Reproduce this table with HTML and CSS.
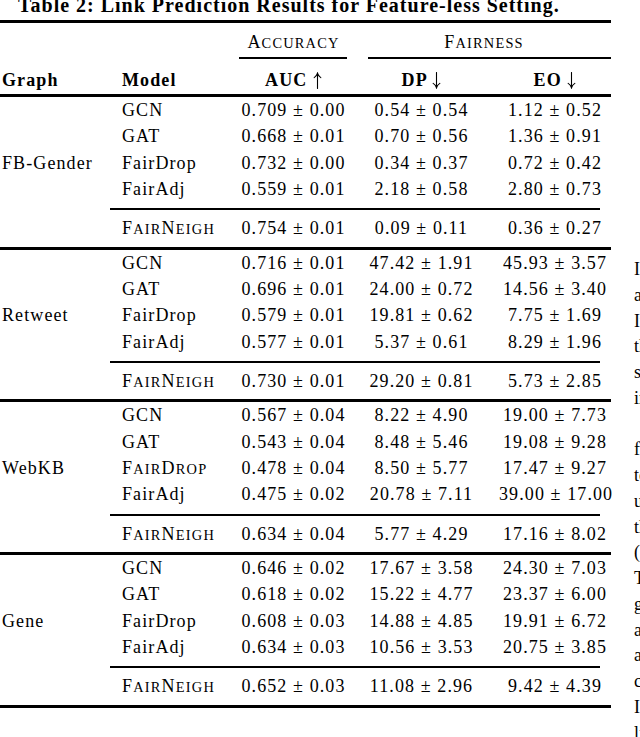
FILE: index.html
```html
<!DOCTYPE html>
<html lang="en">
<head>
<meta charset="utf-8">
<title>Table 2: Link Prediction Results for Feature-less Setting</title>
<link rel="stylesheet" href="styles.css">
</head>
<body>
<div class="page">
  <div class="left">
    <div class="caption">Table 2: Link Prediction Results for Feature-less Setting.</div>
    <div class="rule top"></div>
    <div class="grid head1">
      <div class="sc c3">A<span class="sm">ccuracy</span></div>
      <div class="sc c45">F<span class="sm">airness</span></div>
    </div>
    <div class="grid cmrow">
      <div class="cm acc"></div>
      <div class="cm fair"></div>
    </div>
    <div class="grid head2">
      <div class="c1">Graph</div>
      <div class="c2">Model</div>
      <div class="c3">AUC <svg class="arr" viewBox="0 0 9 17" aria-label="up"><path d="M4.5 16.5V1.2M1.2 5.6C2.9 4.6 4 3 4.5 1.2C5 3 6.1 4.6 7.8 5.6"/></svg></div>
      <div class="c4">DP <svg class="arr" viewBox="0 0 9 17" aria-label="down"><path d="M4.5 0.5V15.8M1.2 11.4C2.9 12.4 4 14 4.5 15.8C5 14 6.1 12.4 7.8 11.4"/></svg></div>
      <div class="c5">EO <svg class="arr" viewBox="0 0 9 17" aria-label="down"><path d="M4.5 0.5V15.8M1.2 11.4C2.9 12.4 4 14 4.5 15.8C5 14 6.1 12.4 7.8 11.4"/></svg></div>
    </div>
    <div class="rule"></div>

    <div class="grid group">
      <div class="gname">FB-Gender</div>
      <div class="c2">GCN</div><div class="c3">0.709 ± 0.00</div><div class="c4">0.54 ± 0.54</div><div class="c5">1.12 ± 0.52</div>
      <div class="c2">GAT</div><div class="c3">0.668 ± 0.01</div><div class="c4">0.70 ± 0.56</div><div class="c5">1.36 ± 0.91</div>
      <div class="c2">FairDrop</div><div class="c3">0.732 ± 0.00</div><div class="c4">0.34 ± 0.37</div><div class="c5">0.72 ± 0.42</div>
      <div class="c2">FairAdj</div><div class="c3">0.559 ± 0.01</div><div class="c4">2.18 ± 0.58</div><div class="c5">2.80 ± 0.73</div>
      <div class="cm grp"></div>
      <div class="c2 sc">F<span class="sm">air</span>N<span class="sm">eigh</span></div><div class="c3">0.754 ± 0.01</div><div class="c4">0.09 ± 0.11</div><div class="c5">0.36 ± 0.27</div>
    </div>
    <div class="rule"></div>

    <div class="grid group">
      <div class="gname">Retweet</div>
      <div class="c2">GCN</div><div class="c3">0.716 ± 0.01</div><div class="c4">47.42 ± 1.91</div><div class="c5">45.93 ± 3.57</div>
      <div class="c2">GAT</div><div class="c3">0.696 ± 0.01</div><div class="c4">24.00 ± 0.72</div><div class="c5">14.56 ± 3.40</div>
      <div class="c2">FairDrop</div><div class="c3">0.579 ± 0.01</div><div class="c4">19.81 ± 0.62</div><div class="c5">7.75 ± 1.69</div>
      <div class="c2">FairAdj</div><div class="c3">0.577 ± 0.01</div><div class="c4">5.37 ± 0.61</div><div class="c5">8.29 ± 1.96</div>
      <div class="cm grp"></div>
      <div class="c2 sc">F<span class="sm">air</span>N<span class="sm">eigh</span></div><div class="c3">0.730 ± 0.01</div><div class="c4">29.20 ± 0.81</div><div class="c5">5.73 ± 2.85</div>
    </div>
    <div class="rule"></div>

    <div class="grid group">
      <div class="gname">WebKB</div>
      <div class="c2">GCN</div><div class="c3">0.567 ± 0.04</div><div class="c4">8.22 ± 4.90</div><div class="c5">19.00 ± 7.73</div>
      <div class="c2">GAT</div><div class="c3">0.543 ± 0.04</div><div class="c4">8.48 ± 5.46</div><div class="c5">19.08 ± 9.28</div>
      <div class="c2 sc">F<span class="sm">air</span>D<span class="sm">rop</span></div><div class="c3">0.478 ± 0.04</div><div class="c4">8.50 ± 5.77</div><div class="c5">17.47 ± 9.27</div>
      <div class="c2">FairAdj</div><div class="c3">0.475 ± 0.02</div><div class="c4">20.78 ± 7.11</div><div class="c5">39.00 ± 17.00</div>
      <div class="cm grp"></div>
      <div class="c2 sc">F<span class="sm">air</span>N<span class="sm">eigh</span></div><div class="c3">0.634 ± 0.04</div><div class="c4">5.77 ± 4.29</div><div class="c5">17.16 ± 8.02</div>
    </div>
    <div class="rule"></div>

    <div class="grid group">
      <div class="gname">Gene</div>
      <div class="c2">GCN</div><div class="c3">0.646 ± 0.02</div><div class="c4">17.67 ± 3.58</div><div class="c5">24.30 ± 7.03</div>
      <div class="c2">GAT</div><div class="c3">0.618 ± 0.02</div><div class="c4">15.22 ± 4.77</div><div class="c5">23.37 ± 6.00</div>
      <div class="c2">FairDrop</div><div class="c3">0.608 ± 0.03</div><div class="c4">14.88 ± 4.85</div><div class="c5">19.91 ± 6.72</div>
      <div class="c2">FairAdj</div><div class="c3">0.634 ± 0.03</div><div class="c4">10.56 ± 3.53</div><div class="c5">20.75 ± 3.85</div>
      <div class="cm grp"></div>
      <div class="c2 sc">F<span class="sm">air</span>N<span class="sm">eigh</span></div><div class="c3">0.652 ± 0.03</div><div class="c4">11.08 ± 2.96</div><div class="c5">9.42 ± 4.39</div>
    </div>
    <div class="rule"></div>
  </div>

  <div class="textcol">
    <div>In this setting</div>
    <div>and the</div>
    <div>It is</div>
    <div>the graph</div>
    <div>such that</div>
    <div>in the</div>
    <div>&nbsp;</div>
    <div>for the</div>
    <div>to the</div>
    <div>using the</div>
    <div>the model</div>
    <div>(e.g.</div>
    <div>The</div>
    <div>graph</div>
    <div>and</div>
    <div>are</div>
    <div>compared</div>
    <div>In</div>
    <div>links</div>
  </div>
</div>
</body>
</html>
```

FILE: styles.css
```css
html, body {
  margin: 0;
  padding: 0;
  background: #fff;
}

body {
  font-family: "Liberation Serif", "Times New Roman", serif;
  color: #000;
}

.page {
  width: 640px;
  height: 737px;
  overflow: hidden;
  display: flex;
  align-items: flex-start;
  gap: 23px;
}

.left {
  width: 611px;
  flex: none;
}

.caption {
  margin-top: -7px;
  padding-left: 18px;
  font-size: 20px;
  font-weight: bold;
  line-height: 24px;
  letter-spacing: 1px;
  white-space: nowrap;
}

.rule {
  height: 3px;
  background: #000;
}

.rule.top {
  margin-top: 3px;
}

.grid {
  display: grid;
  grid-template-columns: 110px 120px 127px 129px 125px;
  font-size: 18px;
  letter-spacing: 1.1px;
  white-space: nowrap;
}

.head1 {
  margin-top: 6px;
  line-height: 26px;
}

.cmrow {
  margin-top: 2px;
  height: 2px;
}

.head2 {
  margin-top: 8px;
  line-height: 26px;
  font-weight: bold;
}

.head2 + .rule {
  margin-top: 1px;
}

.arr {
  width: 9px;
  height: 17px;
  vertical-align: -3px;
  fill: none;
  stroke: #000;
  stroke-width: 1.1;
  stroke-linecap: round;
}

.group {
  line-height: 26.33px;
  padding-bottom: 5px;
}

.sc {
  letter-spacing: 1.2px;
}

.sm {
  text-transform: uppercase;
  font-size: 0.8em;
  line-height: 1;
}

.c1 {
  grid-column: 1;
  padding-left: 2px;
}

.c2 {
  grid-column: 2;
  padding-left: 12px;
}

.c3 {
  grid-column: 3;
  text-align: center;
}

.c4 {
  grid-column: 4;
  text-align: center;
}

.c5 {
  grid-column: 5;
  text-align: center;
  padding-left: 13px;
}

.c45 {
  grid-column: 4 / 6;
  text-align: center;
}

.gname {
  grid-column: 1;
  grid-row: 3;
  padding-left: 2px;
}

.cm {
  height: 2px;
  background: #000;
}

.cm.acc {
  grid-column: 3;
  margin: 0 10px 0 9px;
}

.cm.fair {
  grid-column: 4 / 6;
  margin-left: 11px;
}

.cm.grp {
  grid-column: 2 / 6;
  margin: 6px 11px 5px 0;
}

.textcol {
  flex: none;
  width: 300px;
  margin-top: 257px;
  font-size: 18px;
  line-height: 25.75px;
  white-space: nowrap;
}
```
